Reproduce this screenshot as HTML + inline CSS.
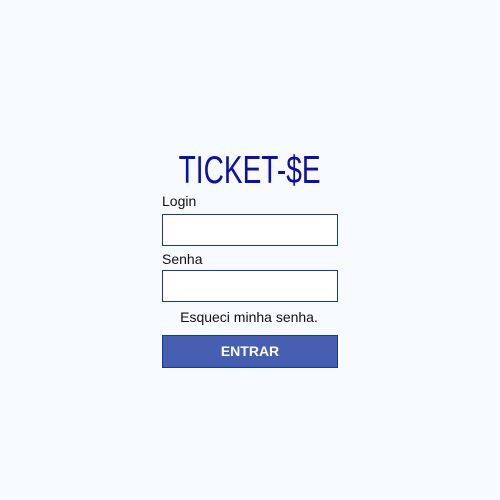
<!DOCTYPE html><html><head><style>
body{margin:0;width:500px;height:500px;background:#f7fbff;font-family:"Liberation Sans",sans-serif;position:relative}
.t{position:absolute;left:150px;width:200px;top:149px;text-align:center;font-size:39px;color:#1010a0;line-height:44px}
.t span{display:inline-block;transform:scaleX(0.72)}
.l{position:absolute;left:162px;font-size:14px;color:#111}
.i{position:absolute;left:162px;width:174px;height:30px;border:1px solid #1a3a8f;background:#fff}
.b{position:absolute;left:162px;top:335px;width:174px;height:31px;border:1px solid #1a3a8f;background:#465eb0;color:#fff;font-weight:bold;font-size:14px;text-align:center;line-height:31px}
</style></head><body>
<div class="t"><span>TICKET-$E</span></div>
<div class="l" style="top:193px">Login</div>
<div class="i" style="top:214px"></div>
<div class="l" style="top:251px">Senha</div>
<div class="i" style="top:270px"></div>
<div class="l" style="top:309px;left:161px;width:176px;text-align:center">Esqueci minha senha.</div>
<div class="b">ENTRAR</div>
</body></html>
